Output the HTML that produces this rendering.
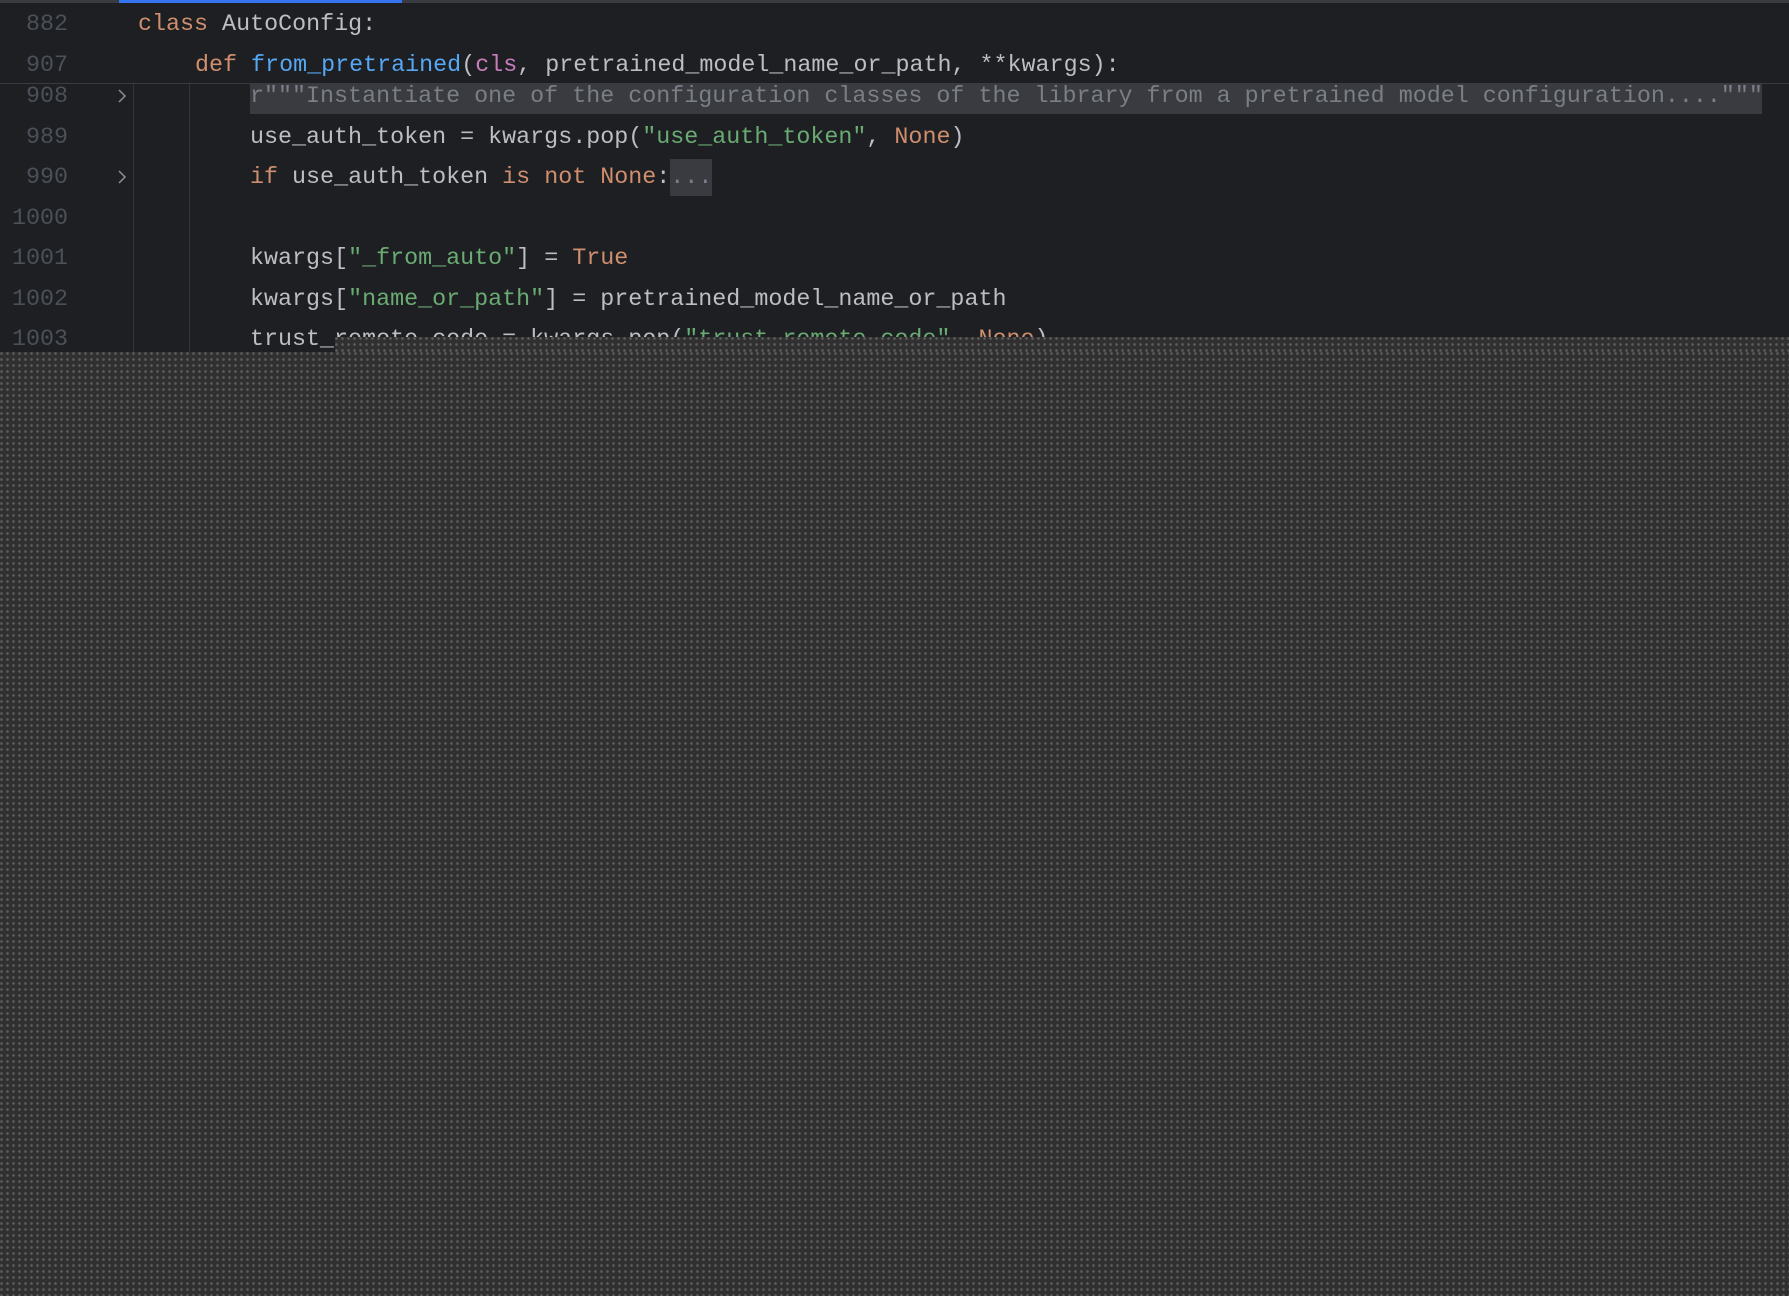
<!DOCTYPE html>
<html><head><meta charset="utf-8"><style>
html,body{margin:0;padding:0;width:1789px;height:1296px;overflow:hidden;background:#1e1f22;}
body{position:relative;font-family:"Liberation Mono",monospace;font-size:23.35px;}
.ln{position:absolute;left:0;width:68px;text-align:right;color:#4b5059;height:40px;line-height:40px;}
.c{position:absolute;white-space:pre;color:#bcbec4;height:40px;line-height:40px;}
.k{color:#cf8e6d}.f{color:#56a8f5}.p{color:#c77dbb}.s{color:#6aab73}.d{color:#7a7e85}
.arr{position:absolute;left:117px;width:10px;height:16px;}
.dots{position:absolute;background-color:#303030;
background-image:radial-gradient(circle at 1.5px 1.5px,#5e5e5e 1px,transparent 1.6px);
background-size:6px 6px;}
</style></head><body>
<div style="position:absolute;left:0;top:0;width:1789px;height:3px;background:#393b40"></div>
<div style="position:absolute;left:119px;top:0;width:283px;height:3px;background:#3574f0"></div>
<div style="position:absolute;left:133px;top:84px;width:1px;height:270px;background:#313438"></div>
<div style="position:absolute;left:189px;top:84px;width:1px;height:270px;background:#313438"></div>
<div style="position:absolute;left:250px;top:84px;width:1512px;height:30px;background:#393b40"></div>
<div style="position:absolute;left:670px;top:159px;width:42px;height:37px;background:#393b40"></div>

<div class="ln" style="top:77px;">908</div>
<svg class="arr" style="top:88px" viewBox="0 0 10 16"><path d="M2 2 L8 8 L2 14" fill="none" stroke="#8c8f95" stroke-width="1.5"/></svg>
<div class="c d" style="left:250px;top:77px">r"""Instantiate one of the configuration classes of the library from a pretrained model configuration...."""</div>

<div class="ln" style="top:118px;">989</div>
<div class="c" style="left:250px;top:118px">use_auth_token = kwargs.pop(<span class="s">"use_auth_token"</span>, <span class="k">None</span>)</div>
<div class="ln" style="top:158px;">990</div>
<svg class="arr" style="top:169px" viewBox="0 0 10 16"><path d="M2 2 L8 8 L2 14" fill="none" stroke="#8c8f95" stroke-width="1.5"/></svg>
<div class="c" style="left:250px;top:158px"><span class="k">if</span> use_auth_token <span class="k">is not None</span>:<span class="d">...</span></div>
<div class="ln" style="top:199px;">1000</div>
<div class="ln" style="top:239px;">1001</div>
<div class="c" style="left:250px;top:239px">kwargs[<span class="s">"_from_auto"</span>] = <span class="k">True</span></div>
<div class="ln" style="top:280px;">1002</div>
<div class="c" style="left:250px;top:280px">kwargs[<span class="s">"name_or_path"</span>] = pretrained_model_name_or_path</div>
<div class="ln" style="top:320px;">1003</div>
<div class="c" style="left:250px;top:320px">trust_remote_code = kwargs.pop(<span class="s">"trust_remote_code"</span>, <span class="k">None</span>)</div>

<div style="position:absolute;left:0;top:3px;width:1789px;height:80px;background:#1e1f22;border-bottom:1px solid #393b40"></div>
<div class="ln" style="top:5px;">882</div>
<div class="c" style="left:138px;top:5px"><span class="k">class</span> AutoConfig:</div>
<div class="ln" style="top:46px;">907</div>
<div class="c" style="left:195px;top:46px"><span class="k">def</span> <span class="f">from_pretrained</span>(<span class="p">cls</span>, pretrained_model_name_or_path, **kwargs):</div>

<div class="dots" style="left:335px;top:337px;width:1454px;height:959px"></div>
<div class="dots" style="left:0;top:352px;width:1789px;height:944px"></div>
</body></html>
